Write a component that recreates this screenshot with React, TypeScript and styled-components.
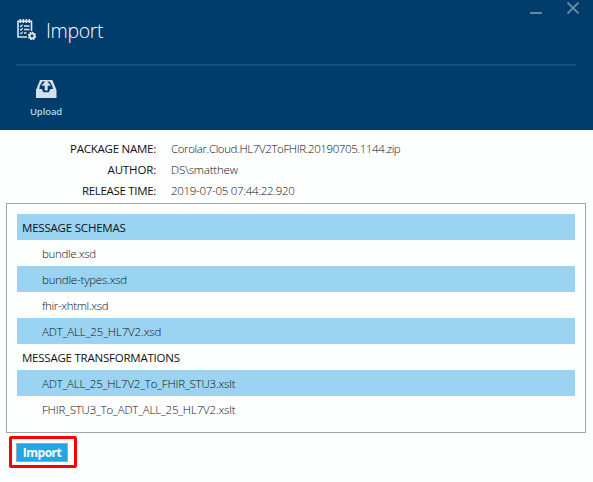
import React from "react";
import styled, { createGlobalStyle } from "styled-components";

const GlobalStyle = createGlobalStyle`
  * { box-sizing: border-box; }
  body { margin: 0; background: #fdfefe; overflow: hidden; }
`;

const Window = styled.main`
  width: 593px;
  height: 482px;
  background: #fdfefe;
  font-family: "Open Sans", "Noto Sans", sans-serif;
  font-size: 11.5px;
  color: #111;
`;

const Header = styled.header`
  height: 130px;
  padding-left: 16px;
  background: #003c6c;
`;

const TitleBar = styled.div`
  display: flex;
  align-items: flex-start;
  height: 64px;
`;

const TitleIcon = styled.svg`
  width: 21px;
  height: 22px;
  margin-top: 18px;
`;

const Title = styled.h1`
  flex: 1;
  margin: 17px 0 0 9px;
  font-size: 19.5px;
  line-height: 28px;
  font-weight: 300;
  letter-spacing: -0.35px;
  color: #ffffff;
`;

const WindowControls = styled.svg`
  width: 63px;
  height: 20px;
`;

const Divider = styled.div`
  width: 560px;
  height: 2px;
  background: #194f7b;
`;

const UploadButton = styled.button`
  display: flex;
  flex-direction: column;
  align-items: center;
  width: 60px;
  margin: 13px 0 0;
  padding: 0;
  border: 0;
  background: none;
  font: 600 9.5px/14px "Open Sans", sans-serif;
  letter-spacing: -0.1px;
  color: #a9dce6;
`;

const TrayIcon = styled.svg`
  width: 22px;
  height: 20px;
  margin-bottom: 6px;
`;

const Details = styled.dl`
  display: grid;
  grid-template-columns: 156px 1fr;
  grid-auto-rows: 21px;
  column-gap: 15px;
  height: 73px;
  margin: 0;
  padding-top: 8px;
  line-height: 21px;
`;

const Label = styled.dt<{ $spacing: number }>`
  text-align: right;
  letter-spacing: ${(p) => p.$spacing}px;
`;

const Value = styled.dd<{ $spacing: number }>`
  margin: 0;
  font-weight: 300;
  letter-spacing: ${(p) => p.$spacing}px;
`;

const Panel = styled.section`
  width: 580px;
  height: 230px;
  margin-left: 6px;
  padding: 10px;
  border: 1px solid #a3a7a9;
`;

const Row = styled.div<{ $heading?: boolean; $spacing: number }>`
  height: 26px;
  padding-left: ${(p) => (p.$heading ? 5 : 25)}px;
  line-height: 27px;
  font-weight: ${(p) => (p.$heading ? 400 : 300)};
  letter-spacing: ${(p) => p.$spacing}px;
  &:nth-child(odd) { background: #9ad4f2; }
`;

const Highlight = styled.div`
  width: 68px;
  height: 32px;
  margin: 3px 0 0 9px;
  padding: 4px;
  border: 3px solid #fe0000;
  border-radius: 2px;
`;

const ImportButton = styled.button`
  display: block;
  width: 52px;
  height: 19px;
  padding: 0;
  border: 1px solid #98aab5;
  background: #26a5e4;
  color: white;
  font: 700 12px/17px "Open Sans", sans-serif;
  letter-spacing: -0.5px;
`;

const details = [
  { label: "PACKAGE NAME:", value: "Corolar.Cloud.HL7V2ToFHIR.20190705.1144.zip", ls: -0.25, vs: -0.39 },
  { label: "AUTHOR:", value: "DS\\smatthew", ls: -0.15, vs: -0.2 },
  { label: "RELEASE TIME:", value: "2019-07-05 07:44:22.920", ls: -0.32, vs: -0.29 },
];

const rows = [
  { text: "MESSAGE SCHEMAS", heading: true, spacing: -0.2 },
  { text: "bundle.xsd", spacing: -0.3 },
  { text: "bundle-types.xsd", spacing: -0.2 },
  { text: "fhir-xhtml.xsd", spacing: -0.33 },
  { text: "ADT_ALL_25_HL7V2.xsd", spacing: -0.12 },
  { text: "MESSAGE TRANSFORMATIONS", heading: true, spacing: -0.23 },
  { text: "ADT_ALL_25_HL7V2_To_FHIR_STU3.xslt", spacing: -0.17 },
  { text: "FHIR_STU3_To_ADT_ALL_25_HL7V2.xslt", spacing: -0.17 },
];

export default function App() {
  return (
    <>
      <GlobalStyle />
      <Window>
        <Header>
          <TitleBar>
            <TitleIcon viewBox="0 0 21 22" fill="none" stroke="#e0e7ec" strokeWidth="1.6">
              <path d="M11 19H2V3.3h13.5V13" />
              <path d="M4.3 1v4M7.3 1v4M10.3 1v4M13.3 1v4" />
              <path d="M8 8h5.5M8 11.5h5.5M8 15h2.5" />
              <path strokeWidth="1.1" d="m4 7.7 1 1 1.8-2M4 11.2l1 1 1.8-2M4 14.8l1 1 1.8-2" />
              <circle cx="16" cy="18" r="2.4" strokeWidth="1.9" />
              <path strokeWidth="1.5" strokeDasharray="1.5 1.24" d="M16 14.5a3.5 3.5 0 1 1 0 7 3.5 3.5 0 0 1 0-7" />
            </TitleIcon>
            <Title>Import</Title>
            <WindowControls viewBox="0 0 63 20" fill="none" stroke="#6689a6">
              <path strokeWidth="2" d="M0 13h12" />
              <path strokeWidth="1.9" d="m37.5 2.5 11 11m0-11-11 11" />
            </WindowControls>
          </TitleBar>
          <Divider />
          <UploadButton>
            <TrayIcon viewBox="0 0 22 20">
              <path fill="#d5e0e8" d="M5 1h12.4l4.1 10v8H1v-8z" />
              <path fill="#003c6c" d="M7.5 2.5 5 6.5 4.2 10h2.6l1.6 3.2h5.4l1.6-3.2H18l-.9-3.5-2.5-4z" />
              <path fill="#d5e0e8" d="M11.2 1 16 6.8h-3.3v4.7h-3V6.8H6.4z" />
            </TrayIcon>
            Upload
          </UploadButton>
        </Header>
        <Details>
          {details.map((d) => (
            <React.Fragment key={d.label}>
              <Label $spacing={d.ls}>{d.label}</Label>
              <Value $spacing={d.vs}>{d.value}</Value>
            </React.Fragment>
          ))}
        </Details>
        <Panel>
          {rows.map((r) => (
            <Row key={r.text} $heading={r.heading} $spacing={r.spacing}>{r.text}</Row>
          ))}
        </Panel>
        <Highlight>
          <ImportButton>Import</ImportButton>
        </Highlight>
      </Window>
    </>
  );
}
